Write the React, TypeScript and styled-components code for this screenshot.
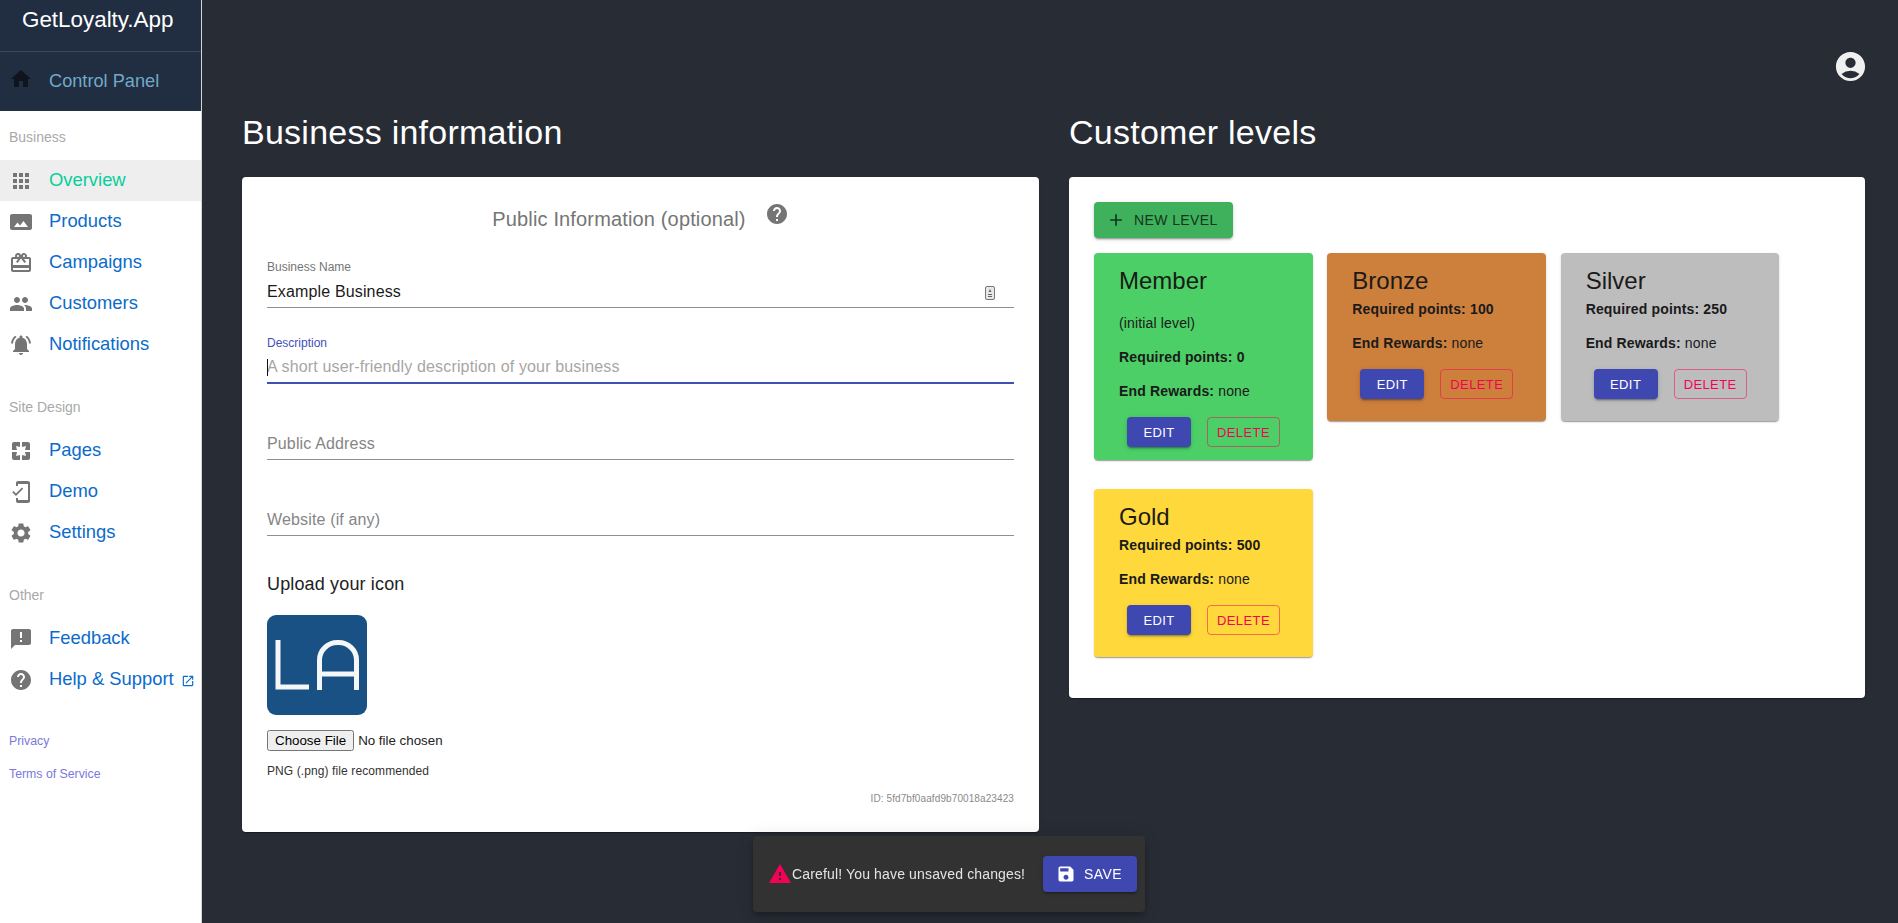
import React from 'react';
import styled, { createGlobalStyle } from 'styled-components';
import {
  MdAccountCircle,
  MdAdd,
  MdAnnouncement,
  MdApps,
  MdCardGiftcard,
  MdHelp,
  MdHome,
  MdMobileFriendly,
  MdNotificationsActive,
  MdOpenInNew,
  MdPages,
  MdPanorama,
  MdPeople,
  MdSave,
  MdSettings,
  MdWarning,
} from 'react-icons/md';

const GlobalStyle = createGlobalStyle`
  html, body {
    margin: 0;
    height: 100%;
    background: #282c35;
    font-family: "Liberation Sans", Arial, sans-serif;
  }
  * { box-sizing: border-box; }
`;

const Layout = styled.div`
  display: flex;
  height: 923px;
  overflow: hidden;
`;

const Sidebar = styled.aside`
  width: 202px;
  flex-shrink: 0;
  background: #fff;
  border-right: 1px solid #d5d5d5;
`;

const SidebarHead = styled.div`
  background: #212d40;
  height: 111px;
`;

const Brand = styled.div`
  height: 52px;
  padding-top: 5px;
  padding-left: 22px;
  color: #fff;
  font-size: 22.4px;
  line-height: 30px;
  border-bottom: 1px solid #3d4757;
`;

const HomeRow = styled.div`
  display: flex;
  align-items: center;
  height: 59px;
  padding-left: 9px;
  color: #70a9c9;
  font-size: 18.2px;
  svg { color: #10141c; margin-right: 16px; margin-top: -5px; }
`;

const SectionLabel = styled.div<{ $top: number }>`
  margin-top: ${p => p.$top}px;
  padding-left: 9px;
  height: 23px;
  line-height: 23px;
  font-size: 14px;
  color: #a9a9a9;
`;

const NavList = styled.nav`
  display: flex;
  flex-direction: column;
  margin-top: 11px;
`;

const NavRow = styled.a<{ $active?: boolean }>`
  display: flex;
  align-items: center;
  height: 41px;
  padding: 0 0 2px 9px;
  font-size: 18.4px;
  color: ${p => (p.$active ? '#06cf9c' : '#0b6bcb')};
  background: ${p => (p.$active ? '#eeeeee' : 'transparent')};
  svg { color: #757575; flex-shrink: 0; }
`;

const NavIcon = styled.span`
  display: flex;
  width: 40px;
  margin-top: 2px;
`;

const External = styled.span`
  display: flex;
  margin-left: 7px;
  margin-top: 4px;
  svg { color: #0b6bcb; }
`;

const FootLink = styled.a<{ $top: number }>`
  display: block;
  margin-top: ${p => p.$top}px;
  padding-left: 9px;
  font-size: 12.3px;
  line-height: 14px;
  color: #7a78dc;
`;

const Main = styled.main`
  flex: 1;
  padding: 0 33px 0 40px;
  position: relative;
`;

const TopBar = styled.div`
  height: 111px;
  display: flex;
  justify-content: flex-end;
  padding-top: 49px;
  margin-right: -3px;
  color: #f0f0f0;
`;

const Columns = styled.div`
  display: grid;
  grid-template-columns: 797px 796px;
  column-gap: 30px;
  align-items: start;
`;

const Heading = styled.h2`
  margin: 0 0 24px;
  color: #fff;
  font-size: 34px;
  font-weight: 400;
  letter-spacing: .25px;
  line-height: 42px;
`;

const Card = styled.section`
  background: #fff;
  border-radius: 4px;
  box-shadow: 0 2px 1px -1px rgba(0,0,0,.2), 0 1px 1px rgba(0,0,0,.14), 0 1px 3px rgba(0,0,0,.12);
`;

const InfoCard = styled(Card)`
  height: 655px;
  padding: 25px 25px 0;
`;

const InfoTitle = styled.div`
  display: flex;
  justify-content: center;
  height: 57px;
  color: #757575;
  font-size: 20px;
  letter-spacing: .15px;
  line-height: 34px;
  svg { color: #757575; margin-left: 19px; }
`;

const Field = styled.div<{ $focused?: boolean; $top: number }>`
  position: relative;
  margin-top: ${p => p.$top}px;
  height: 49px;
  display: flex;
  flex-direction: column;
  justify-content: flex-end;
  border-bottom: ${p => (p.$focused ? '2px solid #3f51b5' : '1px solid #8f8f8f')};
`;

const FieldLabel = styled.label<{ $focused?: boolean }>`
  position: absolute;
  top: 1px;
  left: 0;
  font-size: 12px;
  line-height: 14px;
  color: ${p => (p.$focused ? '#3f51b5' : '#757575')};
`;

const FieldInput = styled.input<{ $muted?: boolean }>`
  border: 0;
  outline: 0;
  padding: 0 0 6px;
  height: 25px;
  font: 16px "Liberation Sans", Arial, sans-serif;
  letter-spacing: .15px;
  color: #1a1a1a;
  background: transparent;
  &::placeholder { color: ${p => (p.$muted ? '#858585' : '#a6a6a6')}; opacity: 1; }
`;

const Caret = styled.span`
  position: absolute;
  left: 0;
  bottom: 6px;
  width: 1px;
  height: 17px;
  background: #111;
`;

const FieldAdornment = styled.svg`
  position: absolute;
  right: 19px;
  bottom: 7px;
`;

const UploadTitle = styled.div`
  margin-top: 36px;
  font-size: 18px;
  letter-spacing: .15px;
  line-height: 24px;
  color: #222;
`;

const IconBox = styled.div`
  margin-top: 19px;
  width: 100px;
  height: 100px;
`;

const FileInput = styled.input`
  display: block;
  margin-top: 15px;
  font: 13.33px "Liberation Sans", Arial, sans-serif;
  color: #222;
`;

const Hint = styled.div`
  margin-top: 13px;
  font-size: 12px;
  letter-spacing: .1px;
  line-height: 14px;
  color: #333;
`;

const IdLine = styled.div`
  margin-top: 15px;
  text-align: right;
  font-size: 10px;
  letter-spacing: .1px;
  line-height: 12px;
  color: #8a8a8a;
`;

const LevelsCard = styled(Card)`
  height: 521px;
  padding: 25px;
`;

const NewLevel = styled.button`
  display: flex;
  align-items: center;
  gap: 8px;
  width: 139px;
  height: 36px;
  padding: 0 0 0 12px;
  border: 0;
  border-radius: 4px;
  background: #3fb15c;
  color: #14351d;
  font: 14px "Liberation Sans", Arial, sans-serif;
  letter-spacing: .4px;
  box-shadow: 0 3px 1px -2px rgba(0,0,0,.2), 0 2px 2px rgba(0,0,0,.14), 0 1px 5px rgba(0,0,0,.12);
`;

const LevelGrid = styled.div`
  display: flex;
  flex-wrap: wrap;
  align-items: flex-start;
  margin-top: 15px;
`;

const LevelCard = styled.div<{ $color: string; $tight?: boolean }>`
  width: 218.67px;
  margin: 0 14.66px 29px 0;
  padding: 15px 25px ${p => (p.$tight ? 13 : 22)}px;
  border-radius: 4px;
  background: ${p => p.$color};
  color: #1a1a1a;
  font-size: 14px;
  letter-spacing: .15px;
  box-shadow: 0 2px 1px -1px rgba(0,0,0,.2), 0 1px 1px rgba(0,0,0,.14), 0 1px 3px rgba(0,0,0,.12);
`;

const LevelName = styled.div`
  font-size: 24px;
  letter-spacing: 0;
  line-height: 26px;
  margin-bottom: 7px;
`;

const LevelLine = styled.div`
  line-height: 16px;
  margin-bottom: 18px;
`;

const InitialNote = styled(LevelLine)`
  margin-top: 21px;
`;

const LevelActions = styled.div`
  display: flex;
  gap: 16px;
  padding-left: 8px;
`;

const EditButton = styled.button`
  width: 64px;
  height: 30px;
  border: 0;
  border-radius: 4px;
  background: #3f47b1;
  color: #fff;
  font: 13px "Liberation Sans", Arial, sans-serif;
  letter-spacing: .4px;
  box-shadow: 0 3px 1px -2px rgba(0,0,0,.2), 0 2px 2px rgba(0,0,0,.14), 0 1px 5px rgba(0,0,0,.12);
`;

const DeleteButton = styled.button`
  width: 73px;
  height: 30px;
  padding: 0;
  background: transparent;
  border: 1px solid rgba(245, 0, 87, .5);
  border-radius: 4px;
  color: #f50057;
  font: 13px "Liberation Sans", Arial, sans-serif;
  letter-spacing: .4px;
`;

const SaveBar = styled.div`
  position: fixed;
  left: 753px;
  top: 836px;
  width: 392px;
  height: 76px;
  display: flex;
  align-items: center;
  padding: 0 8px 0 15px;
  background: #323232;
  border-radius: 4px;
  color: #e4e4e4;
  font-size: 14px;
  letter-spacing: .15px;
  box-shadow: 0 3px 5px -1px rgba(0,0,0,.2), 0 6px 10px rgba(0,0,0,.14), 0 1px 18px rgba(0,0,0,.12);
  svg { flex-shrink: 0; }
`;

const SaveButton = styled.button`
  display: flex;
  align-items: center;
  gap: 8px;
  margin-left: auto;
  width: 94px;
  height: 36px;
  padding: 0 0 0 13px;
  border: 0;
  border-radius: 4px;
  background: #3f47b1;
  color: #fff;
  font: 14px "Liberation Sans", Arial, sans-serif;
  letter-spacing: .4px;
  box-shadow: 0 3px 1px -2px rgba(0,0,0,.2), 0 2px 2px rgba(0,0,0,.14), 0 1px 5px rgba(0,0,0,.12);
`;

const businessNav = [
  { label: 'Overview', icon: <MdApps size={24} />, active: true },
  { label: 'Products', icon: <MdPanorama size={24} /> },
  { label: 'Campaigns', icon: <MdCardGiftcard size={24} /> },
  { label: 'Customers', icon: <MdPeople size={24} /> },
  { label: 'Notifications', icon: <MdNotificationsActive size={24} /> },
];

const siteNav = [
  { label: 'Pages', icon: <MdPages size={24} /> },
  { label: 'Demo', icon: <MdMobileFriendly size={24} /> },
  { label: 'Settings', icon: <MdSettings size={24} /> },
];

const levels = [
  { name: 'Member', color: '#4ccf66', points: 0, initial: true },
  { name: 'Bronze', color: '#cd7f3c', points: 100 },
  { name: 'Silver', color: '#bdbdbd', points: 250 },
  { name: 'Gold', color: '#ffd93b', points: 500 },
];

const LogoMark = () => (
  <svg width="100" height="100" viewBox="0 0 100 100">
    <rect width="100" height="100" rx="9" fill="#1a5184" />
    <g fill="none" stroke="#f4f6f8" strokeWidth="5">
      <path d="M11 25V72H42" />
      <path d="M52.5 75V45a18 17.5 0 0 1 18-17.5h1a18 17.5 0 0 1 18 17.5V75M52.5 59H89.5" />
    </g>
  </svg>
);

const App: React.FC = () => (
  <>
    <GlobalStyle />
    <Layout>
      <Sidebar>
        <SidebarHead>
          <Brand>GetLoyalty.App</Brand>
          <HomeRow>
            <MdHome size={24} />
            Control Panel
          </HomeRow>
        </SidebarHead>

        <SectionLabel $top={15}>Business</SectionLabel>
        <NavList>
          {businessNav.map(item => (
            <NavRow key={item.label} $active={item.active}>
              <NavIcon>{item.icon}</NavIcon>
              {item.label}
            </NavRow>
          ))}
        </NavList>

        <SectionLabel $top={31}>Site Design</SectionLabel>
        <NavList>
          {siteNav.map(item => (
            <NavRow key={item.label}>
              <NavIcon>{item.icon}</NavIcon>
              {item.label}
            </NavRow>
          ))}
        </NavList>

        <SectionLabel $top={31}>Other</SectionLabel>
        <NavList>
          <NavRow>
            <NavIcon><MdAnnouncement size={24} /></NavIcon>
            Feedback
          </NavRow>
          <NavRow>
            <NavIcon><MdHelp size={24} /></NavIcon>
            Help & Support
            <External><MdOpenInNew size={14} /></External>
          </NavRow>
        </NavList>

        <FootLink $top={34}>Privacy</FootLink>
        <FootLink $top={19}>Terms of Service</FootLink>
      </Sidebar>

      <Main>
        <TopBar>
          <MdAccountCircle size={35} />
        </TopBar>
        <Columns>
          <div>
            <Heading>Business information</Heading>
            <InfoCard>
              <InfoTitle>
                Public Information (optional)
                <MdHelp size={24} />
              </InfoTitle>
              <Field $top={0}>
                <FieldLabel>Business Name</FieldLabel>
                <FieldInput defaultValue="Example Business" />
                <FieldAdornment width="10" height="14" viewBox="0 0 10 14">
                  <rect x=".5" y=".5" width="9" height="13" rx="1.5" fill="#e8e8e8" stroke="#777" />
                  <path d="M5 3l1.5 3h-3zM3 8h4v1H3zM3 10h4v1H3z" fill="#666" />
                </FieldAdornment>
              </Field>
              <Field $top={27} $focused>
                <FieldLabel $focused>Description</FieldLabel>
                <FieldInput placeholder="A short user-friendly description of your business" />
                <Caret />
              </Field>
              <Field $top={27}>
                <FieldInput $muted placeholder="Public Address" />
              </Field>
              <Field $top={27}>
                <FieldInput $muted placeholder="Website (if any)" />
              </Field>
              <UploadTitle>Upload your icon</UploadTitle>
              <IconBox><LogoMark /></IconBox>
              <FileInput type="file" />
              <Hint>PNG (.png) file recommended</Hint>
              <IdLine>ID: 5fd7bf0aafd9b70018a23423</IdLine>
            </InfoCard>
          </div>

          <div>
            <Heading>Customer levels</Heading>
            <LevelsCard>
              <NewLevel>
                <MdAdd size={20} />
                NEW LEVEL
              </NewLevel>
              <LevelGrid>
                {levels.map(level => (
                  <LevelCard key={level.name} $color={level.color} $tight={level.initial}>
                    <LevelName>{level.name}</LevelName>
                    {level.initial && <InitialNote>(initial level)</InitialNote>}
                    <LevelLine><b>Required points: {level.points}</b></LevelLine>
                    <LevelLine><b>End Rewards:</b> none</LevelLine>
                    <LevelActions>
                      <EditButton>EDIT</EditButton>
                      <DeleteButton>DELETE</DeleteButton>
                    </LevelActions>
                  </LevelCard>
                ))}
              </LevelGrid>
            </LevelsCard>
          </div>
        </Columns>

        <SaveBar>
          <MdWarning size={24} color="#f50057" />
          Careful! You have unsaved changes!
          <SaveButton>
            <MdSave size={20} />
            SAVE
          </SaveButton>
        </SaveBar>
      </Main>
    </Layout>
  </>
);

export default App;
